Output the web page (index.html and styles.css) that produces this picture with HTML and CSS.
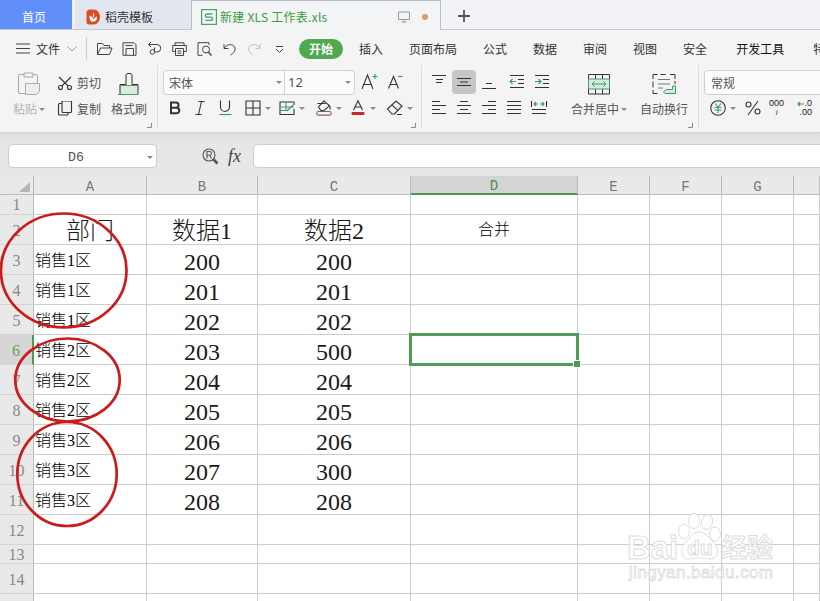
FILE: index.html
```
<!DOCTYPE html>
<html lang="zh-CN">
<head>
<meta charset="utf-8">
<title>新建 XLS 工作表.xls</title>
<link rel="stylesheet" href="styles.css">
</head>
<body>
<div class="app">
  <header class="tabs">
    <div class="tab home">首页</div>
    <div class="tab docer">
      <svg width="14" height="16" viewBox="0 0 14 16"><path d="M4 .5h4a6 7.500 0 0 1 0 15H3A2.500 2.500 0 0 1 .5 13V4A3.500 3.500 0 0 1 4 .5z" fill="#dd4a26"/><path d="M7.500 3.500c-1 2-.6 4 0 5.500C8.400 7 8.600 5.500 7.500 3.500zM3.500 6.500c-.3 4 .8 6 3.500 6.200 3-.2 4.200-2 4-5.200-1.700.5-2.800 1.500-3.400 3-.5-1.800-2-3.200-4.100-4z" fill="#fff"/></svg>
      <span>稻壳模板</span>
    </div>
    <div class="tab doc">
      <svg width="16" height="16" viewBox="0 0 16 16" fill="none" stroke="#43a46b"><rect x=".6" y=".6" width="14.800" height="14.800" stroke-width="1.200"/><path d="M11.500 5H6a1.600 1.600 0 0 0 0 3.200h4a1.600 1.600 0 0 1 0 3.200H4.500" stroke-width="1.300"/></svg>
      <span class="doc-name">新建 XLS 工作表.xls</span>
      <svg class="monitor" width="12" height="12" viewBox="0 0 12 12" fill="none" stroke="#999"><path d="M.5 1h11v7.500H.5zM6 8.500v2.500M3.500 11h5"/></svg>
      <i class="dot"></i>
    </div>
    <div class="plus"><svg width="12" height="12" viewBox="0 0 12 12" stroke="#555" stroke-width="1.800"><path d="M6 0v12M0 6h12"/></svg></div>
  </header>

  <nav class="menu">
    <svg class="burger" width="14" height="11" viewBox="0 0 14 11" stroke="#444" stroke-width="1.100"><path d="M0 1h14M0 5.500h14M0 10h14"/></svg>
    <span class="file">文件</span>
    <svg class="chev" width="10" height="6" viewBox="0 0 10 6" fill="none" stroke="#999"><path d="M.5.5 5 5 9.500.5"/></svg>
    <i class="vline"></i>
    <div class="quick">
      <svg viewBox="0 0 16 14"><path d="M1 12.500V1.500h5l1.500 2H13v2.500M1 12.500 4 6h11.500L13 12.500z"/></svg>
      <svg viewBox="0 0 16 14"><path d="M1.500 .8h11l2 2v10.500h-13zM4.500 13V6.500h7.500V13M4 3.500h7"/></svg>
      <svg viewBox="0 0 16 14"><path d="M2 2.500h8.500a3.700 3.700 0 0 1 0 7.500H8M4.500 0 2 2.500 4.500 5M8 5.500V10a2.200 2.200 0 1 1-2.200-2.200H8"/></svg>
      <svg viewBox="0 0 16 14"><path d="M4 9.500H1.200v-6h13.600v6H12M3.500 3.500V.8h9v2.700M4 6.500h8v7H4zM6 9h4M6 11.200h4"/></svg>
      <svg viewBox="0 0 16 14"><path d="M6 13.300H1.500V.7h11V3"/><circle cx="9.500" cy="7.500" r="3.500"/><path d="m12 10.200 3 3.300" stroke-width="1.500"/></svg>
      <svg viewBox="0 0 16 14"><path d="M2.500 2v4.500h4.500M2.800 6C5 3 8 2 11 3c4 1.800 3.500 7-2 10"/></svg>
      <svg class="off" viewBox="0 0 16 14"><path d="M13.500 2v4.500H9M13.200 6C11 3 8 2 5 3 1 4.800 1.500 10 6 12.500"/></svg>
      <svg viewBox="0 0 16 14"><path d="M4.500 4.500h7M4.500 7 8 10.500 11.500 7"/></svg>
    </div>
    <span class="pill">开始</span>
    <div class="items">
      <span>插入</span><span>页面布局</span><span>公式</span><span>数据</span><span>审阅</span><span>视图</span><span>安全</span><span class="dev">开发工具</span><span class="special">特</span>
    </div>
  </nav>

  <section class="ribbon">
    <div class="group clip">
      <div class="big paste">
        <svg width="24" height="24" viewBox="0 0 24 24" fill="none" stroke="#aaa"><path d="M7 2.500H3a1.500 1.500 0 0 0-1.500 1.500v16A1.500 1.500 0 0 0 3 21.500h5M16 2.500h3A1.500 1.500 0 0 1 20.500 4v7M7 1h9v4H7z"/><path d="M8.500 11.500h14v8l-3 3h-11z" fill="#eee"/></svg>
        <span>粘贴<i class="caret"></i></span>
      </div>
      <div class="pair">
        <div><svg width="16" height="16" viewBox="0 0 16 16" fill="none" stroke="#333" stroke-width="1.100"><circle cx="3.500" cy="12.500" r="2"/><circle cx="12.500" cy="12.500" r="2"/><path d="m2 2 9.200 9M14 2l-9.200 9"/></svg><span>剪切</span></div>
        <div><svg width="16" height="16" viewBox="0 0 16 16" fill="none" stroke="#333" stroke-width="1.100"><rect x="5" y="0" width="9.500" height="11.500" rx="1"/><path d="M5 2.500H2.500a1 1 0 0 0-1 1V13a1 1 0 0 0 1 1h7.500a1 1 0 0 0 1-1v-1.500"/></svg><span>复制</span></div>
      </div>
      <div class="big brush">
        <svg width="24" height="24" viewBox="0 0 24 24" fill="none"><path d="M3 13.500h18v8.500H3z" fill="#d9ecdf"/><path d="M3 22v-9.500h6V3a2 2 0 0 1 2-1.500h2A2 2 0 0 1 15 3v9.500h6V22" stroke="#333"/><path d="M1 22.500h20.500M3 13.500h18" stroke="#4a9a6a"/></svg>
        <span>格式刷</span>
      </div>
      <svg class="corner" viewBox="0 0 5 5"><path d="M4.500 0v4.500H0"/></svg>
    </div>

    <div class="group font">
      <div class="row top">
        <div class="combo"><span class="face">宋体<i class="caret"></i></span><span class="size">12<i class="caret"></i></span></div>
        <svg class="grow" width="18" height="18" viewBox="0 0 18 18" fill="none" stroke="#333" stroke-width="1.100"><path d="m1 16 5.500-14L12 16M3 11.500h7"/><path d="M11.500 3.500h5M14 1v5" stroke="#3c9a62"/></svg>
        <svg class="shrink" width="18" height="18" viewBox="0 0 18 18" fill="none" stroke="#333" stroke-width="1.100"><path d="m2.500 15.500 5-12 5 12M4.300 11.500h6.400"/><path d="M12 3.500h4.500" stroke="#3c9a62"/></svg>
      </div>
      <div class="row low">
        <svg class="b-bold" viewBox="0 0 16 16"><path d="M4 2.500h5a2.600 2.600 0 0 1 0 5.200H4zM4 7.700h5.500a2.800 2.800 0 0 1 0 5.600H4z" stroke-width="2"/></svg>
        <svg class="b-it" viewBox="0 0 16 16"><path d="M6.500 1.500h6M3.500 14.500h6M9.500 1.500l-3 13"/></svg>
        <svg class="b-un" viewBox="0 0 16 16"><path d="M3.500 .5V7a4.500 4.500 0 0 0 9 0V.5"/><path d="M2.500 14.500h12" stroke="#3c9a62"/></svg>
        <svg class="b-drop" viewBox="0 0 16 16"><path d="M1 1h14v14H1zM8 1v14M1 8h14"/></svg><i class="caret"></i>
        <svg class="b-drop" viewBox="0 0 16 16"><path d="M1 12V2h14v3M1 12v2.500h14V9"/><path d="M1 7h14M1 10.500h7M7 2v8.500M14 5l-6 6" stroke="#3c9a62"/></svg><i class="caret"></i>
        <svg class="b-drop wide" viewBox="0 0 16 16"><path d="m8 .8 5.500 5L8 10.500H5L2.500 7zM1.500 3.500h8M12 5c2 1 2.500 2.500 2 4.500"/><rect x=".7" y="11.500" width="14.500" height="3.600" rx="1.800" stroke="#87606a"/></svg><i class="caret"></i>
        <svg class="b-drop" viewBox="0 0 16 16"><path d="M3.500 10 8 .8 12.500 10M5 7h6"/><rect x="1.500" y="12" width="13" height="3" rx="1" fill="#c62828" stroke="none"/></svg><i class="caret"></i>
        <svg class="b-drop wide" viewBox="0 0 16 16"><path d="m.5 9 8.500-8 6 5L7.500 14H5zM5 5.200l6 5.500M10 14.500h5"/></svg><i class="caret"></i>
      </div>
      <svg class="corner" viewBox="0 0 5 5"><path d="M4.500 0v4.500H0"/></svg>
    </div>

    <div class="group align">
      <div class="aligns">
        <div class="row top">
          <svg viewBox="0 0 16 16"><path d="M1 1.500h14M5 5.500h7M5 8.500h6"/></svg>
          <svg class="on" viewBox="0 0 16 16"><path d="M1 4.500h14M4 8h8M1 11.500h14"/></svg>
          <svg viewBox="0 0 16 16"><path d="M5 9.500h6M1 14.500h14"/></svg>
          <svg class="in1" viewBox="0 0 16 16"><path d="M1 1.500h14M9 5.500h6M9 9.500h6M1 13.500h14"/><path d="M7 7.500H1M3.500 5 1 7.500l2.500 2.500" stroke="#3c9a62"/></svg>
          <svg viewBox="0 0 16 16"><path d="M1 1.500h14M9 5.500h6M9 9.500h6M1 13.500h14"/><path d="M1 7.500h6M4.500 5 7 7.500l-2.500 2.500" stroke="#3c9a62"/></svg>
        </div>
        <div class="row low">
          <svg viewBox="0 0 16 16"><path d="M1 1.500h8M1 5.500h14M1 9.500h8M1 13.500h14"/></svg>
          <svg viewBox="0 0 16 16"><path d="M4 1.500h8M1 5.500h14M4 9.500h8M1 13.500h14"/></svg>
          <svg viewBox="0 0 16 16"><path d="M7 1.500h8M1 5.500h14M7 9.500h8M1 13.500h14"/></svg>
          <svg viewBox="0 0 16 16"><path d="M1 1.500h14M1 5.500h14M1 9.500h14M1 13.500h14"/></svg>
          <svg viewBox="0 0 16 16"><path d="M.5 1v6M15.500 1v6M1 9.500h14M1 13.500h14"/><path d="M3 4h4M9 4h4M5 2 3 4l2 2M11 2l2 2-2 2" stroke="#3c9a62"/></svg>
        </div>
      </div>
      <div class="big merge">
        <svg width="24" height="24" viewBox="0 0 24 24" fill="none" stroke="#333"><path d="M1.500 2.500h21v19.500h-21zM8.500 2.500V7M15.500 2.500V7M8.500 17v5M15.500 17v5"/><path d="M1.500 7h21v10h-21z" fill="#d5ecdc" stroke="#4a9a6a"/><path d="M5 12h14M7.500 9.500 5 12l2.500 2.500M16.500 9.500 19 12l-2.500 2.500" stroke="#3c9a62"/></svg>
        <span>合并居中<i class="caret"></i></span>
      </div>
      <div class="big wrap">
        <svg width="26" height="24" viewBox="0 0 26 24" fill="none" stroke="#333"><path d="M2 7V2.500h4.500M9.500 2.500h5M19 2.500h5V7M2 9.500v6M2 18v3.500h4.500M24 9v3"/><path d="M7 7.500h12M7 12h12M7 16h5" stroke="#777"/><path d="M21.500 14h3v7.500H14l-1.500-1.500L15 17.500h6.500z" fill="#d5ecdc" stroke="#3c9a62"/></svg>
        <span>自动换行</span>
      </div>
      <svg class="corner" viewBox="0 0 5 5"><path d="M4.500 0v4.500H0"/></svg>
    </div>

    <div class="group num">
      <div class="row top"><div class="format">常规</div></div>
      <div class="row low">
        <svg class="yen" viewBox="0 0 16 16"><circle cx="8" cy="8" r="7.300"/><path d="M5 3.500 8 7l3-3.500M8 7v6M4.500 7.500h7M4.500 10h7" stroke="#3c9a62"/></svg><i class="caret"></i>
        <svg class="pct" viewBox="0 0 16 16"><circle cx="3.500" cy="4.500" r="2.500"/><circle cx="12.500" cy="11.500" r="2.500"/><path d="M13 1 3 15"/></svg>
        <div class="thou"><span>000</span><svg viewBox="0 0 4 6"><path d="M2 .5V3L1 5" /></svg></div>
        <div class="dec"><span><svg viewBox="0 0 7 6"><path d="M7 3H1M3 1 1 3l2 2"/></svg>.0</span><span>.00</span></div>
      </div>
    </div>
  </section>

  <section class="formula">
    <div class="namebox">D6<i class="caret"></i></div>
    <svg class="find" width="17" height="17" viewBox="0 0 17 17" fill="none" stroke="#555" stroke-width="1.100"><circle cx="7" cy="7" r="6"/><path d="M5 10.500v-7h2.500a1.900 1.900 0 0 1 0 3.800H5M7.500 7.300l2 3.200"/><path d="m11.500 11.500 4 4" stroke-width="2.600"/></svg>
    <span class="fx">fx</span>
    <div class="input"></div>
  </section>

  <main class="sheet">
    <table>
      <colgroup><col class="c0"><col class="ca"><col class="cb"><col class="cc"><col class="cd"><col class="ce"><col class="ce"><col class="ce"><col class="ch"></colgroup>
      <tr class="head"><th class="all"><svg width="11" height="10" viewBox="0 0 11 10"><path d="M11 0v10H0z" fill="#b5b5b5"/></svg></th><th>A</th><th>B</th><th>C</th><th class="sel">D</th><th>E</th><th>F</th><th>G</th><th></th></tr>
      <tr class="r1"><th>1</th><td></td><td></td><td></td><td></td><td></td><td></td><td></td><td></td></tr>
      <tr class="title"><th>2</th><td>部门</td><td>数据1</td><td>数据2</td><td class="small">合并</td><td></td><td></td><td></td><td></td></tr>
      <tr><th>3</th><td class="name">销售1区</td><td>200</td><td>200</td><td></td><td></td><td></td><td></td><td></td></tr>
      <tr><th>4</th><td class="name">销售1区</td><td>201</td><td>201</td><td></td><td></td><td></td><td></td><td></td></tr>
      <tr><th>5</th><td class="name">销售1区</td><td>202</td><td>202</td><td></td><td></td><td></td><td></td><td></td></tr>
      <tr><th class="sel">6</th><td class="name">销售2区</td><td>203</td><td>500</td><td class="cur"><i class="cursor"></i></td><td></td><td></td><td></td><td></td></tr>
      <tr><th>7</th><td class="name">销售2区</td><td>204</td><td>204</td><td></td><td></td><td></td><td></td><td></td></tr>
      <tr><th>8</th><td class="name">销售2区</td><td>205</td><td>205</td><td></td><td></td><td></td><td></td><td></td></tr>
      <tr><th>9</th><td class="name">销售3区</td><td>206</td><td>206</td><td></td><td></td><td></td><td></td><td></td></tr>
      <tr><th>10</th><td class="name">销售3区</td><td>207</td><td>300</td><td></td><td></td><td></td><td></td><td></td></tr>
      <tr><th>11</th><td class="name">销售3区</td><td>208</td><td>208</td><td></td><td></td><td></td><td></td><td></td></tr>
      <tr><th>12</th><td></td><td></td><td></td><td></td><td></td><td></td><td></td><td></td></tr>
      <tr class="r13"><th>13</th><td></td><td></td><td></td><td></td><td></td><td></td><td></td><td></td></tr>
      <tr><th>14</th><td></td><td></td><td></td><td></td><td></td><td></td><td></td><td></td></tr>
      <tr><th></th><td></td><td></td><td></td><td></td><td></td><td></td><td></td><td></td></tr>
    </table>
  </main>

  <svg class="rings" width="140" height="330" viewBox="0 205 140 330" fill="none" stroke="#cb1b1b" stroke-width="2.700"><ellipse cx="63.700" cy="270.500" rx="62.800" ry="57"/><ellipse cx="67.500" cy="380" rx="52.200" ry="41.500"/><ellipse cx="67" cy="474" rx="49.700" ry="52"/></svg>

  <svg class="mark" width="160" height="80" viewBox="620 510 160 80" fill="#fff" stroke="#dadada">
    <text class="m-big" x="627" y="559" textLength="51" lengthAdjust="spacingAndGlyphs">Bai</text>
    <ellipse cx="684" cy="531.500" rx="5.500" ry="7.500"/><ellipse cx="694" cy="521" rx="5.500" ry="7.500"/><ellipse cx="707" cy="522" rx="5.500" ry="7.500" transform="rotate(12 707 522)"/><ellipse cx="715" cy="534" rx="5.500" ry="7"/>
    <path d="M699 532c-6 0-8 5-12 9-8 6-7 18 2 18 4 0 6-1 10-1s7 1 11 1c9 0 10-11 3-17-4-4-7-10-14-10z"/>
    <text class="m-du" x="687" y="555">du</text>
    <text class="m-cn" x="721" y="557">经验</text>
    <text class="m-url" x="629" y="578" textLength="144">jingyan.baidu.com</text>
  </svg>
</div>
</body>
</html>
```
FILE: styles.css
```
* { box-sizing: border-box; }
body { margin: 0; font: 12px/16px "Noto Sans CJK SC", sans-serif; color: #333; }
.app { position: relative; width: 820px; height: 601px; overflow: hidden; background: #e7e7e7; }
svg { display: block; flex: none; }
i { font-style: normal; }

.tabs { display: flex; height: 30px; background: #f1f3f9; border-bottom: 1px solid #c2cad3; }
.tab { display: flex; align-items: center; height: 29px; padding-top: 4px; }
.home { width: 72px; justify-content: center; padding-right: 4px; background: #618ffa; color: #fff; }
.docer { width: 119px; padding-left: 11px; gap: 5px; background: #e2e6ef; border-left: 3px solid #eef1f7; }
.doc { width: 250px; height: 30px; padding: 2px 0 0 9px; background: #f3f4f6; border: 1px solid #b9bfca; border-bottom: 0; }
.doc-name { width: 110px; margin-left: 3px; color: #399b3c; white-space: nowrap; letter-spacing: .25px; }
.monitor { margin-left: 68px; }
.dot { width: 6px; height: 6px; margin-left: 12px; border-radius: 50%; background: #dd9a5b; }
.plus { display: flex; align-items: center; padding: 3px 0 0 17px; }

.menu { display: flex; align-items: center; height: 35px; padding: 2px 0 0 16px; background: #f4f4f4; white-space: nowrap; overflow: hidden; }
.menu > * { flex: none; }
.file { margin-left: 6px; }
.chev { margin-left: 7px; }
.vline { width: 1px; height: 23px; margin: 0 5px 0 9px; background: #ccc; }
.quick { display: flex; }
.quick svg { width: 25px; height: 14px; fill: none; stroke: #444; overflow: visible; }
.quick svg.off { stroke: #c0c0c0; }
.pill { width: 44px; height: 20px; margin-left: 7px; border-radius: 10px; background: #50a851; color: #fff; font-weight: bold; text-align: center; line-height: 19px; }
.items { display: flex; gap: 26px; margin-left: 16px; }
.items .dev { margin-left: 3px; color: #111; }
.items .special { margin-left: 3px; }

.ribbon { display: flex; height: 68px; background: #f4f4f4; border-bottom: 1px solid #d2d2d2; }
.group { position: relative; flex: none; height: 63px; border-right: 1px solid #dedede; color: #555; }
.clip { display: flex; width: 158px; padding-left: 13px; }
.font { width: 264px; padding-left: 5px; }
.align { display: flex; width: 277px; }
.num { width: 122px; padding-left: 5px; border: 0; }
.corner { position: absolute; right: 5px; top: 58px; width: 5px; height: 5px; fill: none; stroke: #888; overflow: visible; }
.caret { display: inline-block; flex: none; width: 0; height: 0; border: 3px solid transparent; border-top: 3px solid #8a8a8a; border-bottom: 0; vertical-align: 3px; }
.big { display: flex; flex-direction: column; align-items: center; padding-top: 7px; white-space: nowrap; }
.big span { margin-top: 5px; }
.big .caret { margin-left: 2px; }
.paste { width: 32px; color: #b4b4b4; }
.pair { display: flex; flex-direction: column; gap: 10px; width: 56px; margin-left: 12px; padding-top: 10px; }
.pair div { display: flex; gap: 4px; white-space: nowrap; }
.brush { width: 36px; margin-left: -2px; }

.row { display: flex; align-items: center; }
.row.top { height: 34px; }
.row.low { height: 18px; }
.row svg { fill: none; stroke: #333; stroke-width: 1.1; overflow: visible; }
.combo { display: flex; width: 192px; height: 25px; background: #fcfcfc; border: 1px solid #cfcfcf; border-radius: 4px; line-height: 23px; }
.face { display: flex; align-items: center; justify-content: space-between; width: 121px; padding: 0 2px 0 5px; border-right: 1px solid #d4d4d4; }
.size { display: flex; flex: 1; align-items: center; justify-content: space-between; padding: 0 3px; font: 13px "Noto Sans", sans-serif; }
.grow { margin-left: 6px; }
.shrink { margin-left: 7px; }
.low > svg { width: 16px; height: 16px; }
.b-bold { margin-left: 4px; }
.b-it, .b-un { margin-left: 9px; }
.b-drop { margin-left: 12px; }
.low .caret { margin-left: 4px; }
.low .caret + .b-drop { margin-left: 8px; }
.low .caret + .wide { margin-left: 11px; }

.aligns { width: 139px; padding-left: 9px; }
.aligns .row { gap: 9px; }
.aligns .top svg { width: 16px; height: 16px; }
.aligns .top svg.on { width: 24px; height: 24px; padding: 4px; margin: 0 -4px; border-radius: 4px; background: #c5c5c5; }
.aligns .top .in1 { margin-left: 3px; }
.merge { width: 58px; margin-left: 9px; }
.wrap { width: 48px; margin-left: 12px; }

.format { width: 140px; flex: none; height: 25px; padding-left: 6px; background: #fcfcfc; border: 1px solid #cfcfcf; border-radius: 4px; line-height: 23px; }
.yen { margin-left: 6px; }
.pct { margin-left: 9px; }
.thou, .dec { display: flex; flex: none; flex-direction: column; width: 15px; height: 18px; font: 9px/9px "Liberation Sans", sans-serif; color: #222; }
.thou { align-items: center; margin-left: 8px; }
.thou svg { width: 4px; height: 6px; margin-top: 2px; stroke: #3c9a62; }
.dec { align-items: flex-end; margin-left: 12px; width: 16px; }
.dec span { display: flex; align-items: center; }
.dec svg { width: 7px; height: 6px; stroke: #3c9a62; }

.formula { display: flex; align-items: center; height: 43px; padding: 3px 0 0 8px; background: linear-gradient(#dcdcdc, #e7e7e7 8px); }
.namebox { display: flex; align-items: center; justify-content: flex-end; width: 149px; height: 24px; padding: 2px 3px 0 0; background: #fff; border: 1px solid #cdcdcd; border-radius: 4px; font: 13.3px "Liberation Mono", monospace; color: #555; }
.namebox .caret { margin-left: 63px; }
.find { margin-left: 45px; }
.fx { width: 34px; padding-left: 9px; font: italic 18px/20px "Liberation Serif", serif; color: #444; }
.input { flex: 1; height: 24px; margin: 0 -6px 0 0; background: #fff; border: 1px solid #cdcdcd; border-radius: 4px; }

table { width: 820px; table-layout: fixed; border-collapse: separate; border-spacing: 0; background: #fff; }
.c0 { width: 34px; } .ca { width: 113px; } .cb { width: 111px; } .cc { width: 153px; } .cd { width: 167px; } .ce { width: 72px; } .ch { width: 26px; }
tr { height: 30px; }
tr.head { height: 19px; }
tr.r1 { height: 20px; }
tr.r13 { height: 19px; }
td, th { padding: 0; border-right: 1px solid #cdcdcd; border-bottom: 1px solid #cdcdcd; text-align: center; vertical-align: middle; overflow: hidden; }
td { font-family: "Liberation Serif", "Noto Sans CJK SC", serif; font-size: 24px; color: #1a1a1a; line-height: 24px; padding-top: 5px; font-weight: 300; }
tr.r1 td, tr.r13 td { line-height: 0; padding: 0; }
th { background: #e9e9e9; border-right-color: #bbb; border-bottom-color: #d4d4d4; font: 16px/16px "Liberation Serif", serif; color: #888; padding-top: 2px; }
.r1 th, .r13 th { padding-top: 1px; }
.head th { border-color: #bbb; font: 14px/14px "Liberation Mono", monospace; color: #777; padding-top: 4px; }
.head th.all { text-align: right; vertical-align: bottom; padding: 0 3px 2px 0; }
.all svg { display: inline-block; vertical-align: bottom; }
.head th.sel { background: #d4d4d4; border-bottom: 2px solid #4c9b52; color: #429447; padding-top: 3px; }
th.sel { background: #d6d6d6; border-right: 2px solid #4c9b52; color: #5aa35e; }
.head th.sel { border-right: 1px solid #bbb; }
td.name { padding: 2px 0 0 1px; text-align: left; font-size: 16px; color: #000; }
.title td { padding-top: 3px; }
.title td.small { font-size: 16px; padding: 1px 0 0; color: #000; }
.cur { position: relative; overflow: visible; }
.cursor { position: absolute; left: -2px; top: -2px; width: 170px; height: 33px; border: 3px solid #4f9d54; }
.cursor::after { content: ""; position: absolute; right: -4px; bottom: -4px; width: 6px; height: 6px; background: #4f9d54; outline: 1px solid #fff; }

.rings { position: absolute; left: 0; top: 205px; }
.mark { position: absolute; left: 620px; top: 510px; opacity: .9; }
.m-big { font: bold 33px "Liberation Sans", sans-serif; }
.m-du { font: bold 21px "Liberation Sans", sans-serif; }
.m-cn { font: bold 26px "Noto Sans CJK SC", sans-serif; }
.m-url { font: 17px "Liberation Sans", sans-serif; stroke-width: .8; }
```
